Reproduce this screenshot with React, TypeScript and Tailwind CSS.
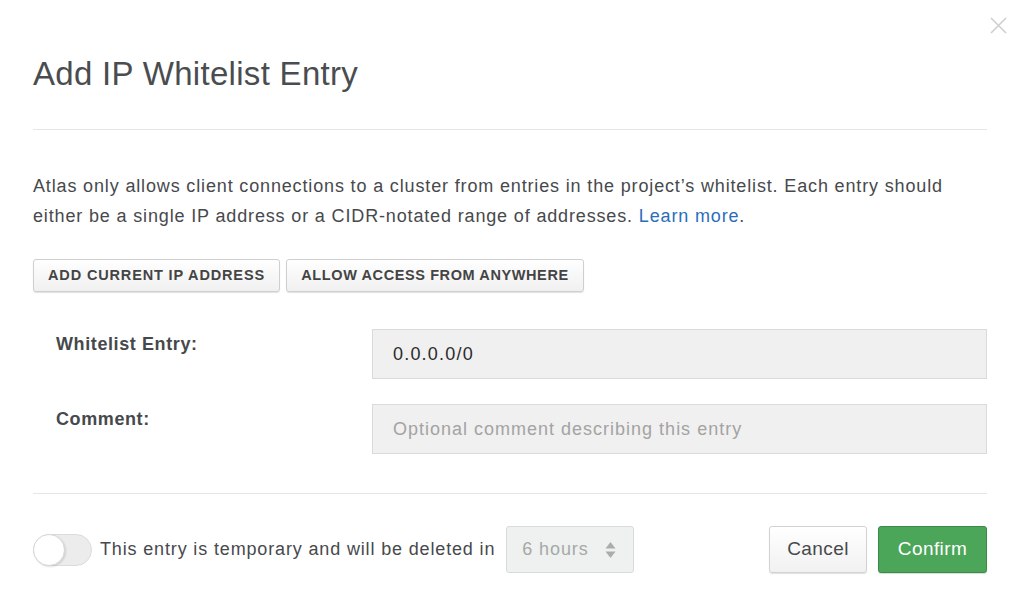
import React from "react";

export default function App() {
  return (
    <div className="relative w-[1024px] h-[613px] bg-white overflow-hidden" style={{ fontFamily: '"Liberation Sans", Arial, sans-serif' }}>
      <button className="absolute left-[990px] top-[17px] w-[17px] h-[17px] text-[#cfcfcf]">
        <svg viewBox="0 0 17 17" width="17" height="17" fill="none" stroke="currentColor" strokeWidth="1.6">
          <path d="M1 1 L16 16 M16 1 L1 16" />
        </svg>
      </button>
      <div className="pl-[33px] pr-[37px]">
        <div className="pt-[52px] pb-[33px] border-b border-[#e6e6e6]">
          <h1 className="text-[33px] leading-[44px] font-light text-[#4a4d50] tracking-[0.3px]">Add IP Whitelist Entry</h1>
        </div>
        <p className="mt-[41px] text-[18px] leading-[30px] tracking-[0.85px] text-[#47494c] whitespace-nowrap">
          Atlas only allows client connections to a cluster from entries in the project’s whitelist. Each entry should
          <br />
          either be a single IP address or a CIDR-notated range of addresses.{" "}
          <a className="text-[#2a6ebb]">Learn more</a>.
        </p>
        <div className="mt-[28px] flex gap-[6px]">
          <button className="w-[247px] h-[33px] rounded-[3px] border border-[#cfcfcf] bg-gradient-to-b from-white to-[#f0f0f0] shadow-[0_1px_1px_rgba(0,0,0,0.12)] text-[14.5px] font-bold text-[#444] tracking-[0.85px] whitespace-nowrap">
            ADD CURRENT IP ADDRESS
          </button>
          <button className="w-[298px] h-[33px] rounded-[3px] border border-[#cfcfcf] bg-gradient-to-b from-white to-[#f0f0f0] shadow-[0_1px_1px_rgba(0,0,0,0.12)] text-[14.5px] font-bold text-[#444] tracking-[0.6px] whitespace-nowrap">
            ALLOW ACCESS FROM ANYWHERE
          </button>
        </div>
        <div className="mt-[37px] flex flex-col gap-[25px] pb-[39px] border-b border-[#e6e6e6]">
          <div className="flex">
            <div className="w-[339px] pl-[23px] pt-[2px] text-[18px] tracking-[0.6px] font-bold text-[#46494c]">Whitelist Entry:</div>
            <div className="flex-1 h-[50px] border border-[#dadada] bg-[#f0f0f0] flex items-center pl-[20px] text-[18px] tracking-[1.2px] text-[#2b2b2b]">
              0.0.0.0/0
            </div>
          </div>
          <div className="flex">
            <div className="w-[339px] pl-[23px] pt-[2px] text-[18px] tracking-[0.6px] font-bold text-[#46494c]">Comment:</div>
            <div className="flex-1 h-[50px] border border-[#dadada] bg-[#f0f0f0] flex items-center pl-[20px] text-[18px] tracking-[1px] text-[#a3a3a3]">
              Optional comment describing this entry
            </div>
          </div>
        </div>
        <div className="mt-[32px] flex items-center">
          <div className="w-[59px] h-[32px] rounded-full bg-[#ececec] border border-[#dcdcdc] relative">
            <div className="absolute left-[-1px] top-[-1px] w-[32px] h-[32px] rounded-full bg-white border border-[#d8d8d8] shadow-[1px_1px_2px_rgba(0,0,0,0.12)]" />
          </div>
          <span className="ml-[8px] text-[18px] tracking-[0.85px] text-[#47494c] whitespace-nowrap">This entry is temporary and will be deleted in</span>
          <div className="ml-[11px] w-[128px] h-[47px] rounded-[3px] border border-[#d6dcd8] bg-[#eef1ef] flex items-center justify-between pl-[15px] pr-[17px] text-[18px] tracking-[0.9px] text-[#a5a9a7]">
            <span>6 hours</span>
            <svg width="11" height="18" viewBox="0 0 11 18" fill="#a9aeab">
              <path d="M5.5 1 L10.5 7.5 L0.5 7.5 Z" />
              <path d="M0.5 10.5 L10.5 10.5 L5.5 17 Z" />
            </svg>
          </div>
          <div className="flex-1" />
          <button className="w-[98px] h-[47px] rounded-[3px] border border-[#d2d2d2] bg-gradient-to-b from-white to-[#f1f1f1] shadow-[0_1px_1px_rgba(0,0,0,0.12)] text-[19px] tracking-[0.4px] text-[#46494c]">
            Cancel
          </button>
          <button className="ml-[11px] w-[109px] h-[47px] rounded-[3px] border border-[#3b8a47] bg-[#4ca65a] shadow-[0_1px_1px_rgba(0,0,0,0.15)] text-[19px] tracking-[0.4px] text-white">
            Confirm
          </button>
        </div>
      </div>
    </div>
  );
}
